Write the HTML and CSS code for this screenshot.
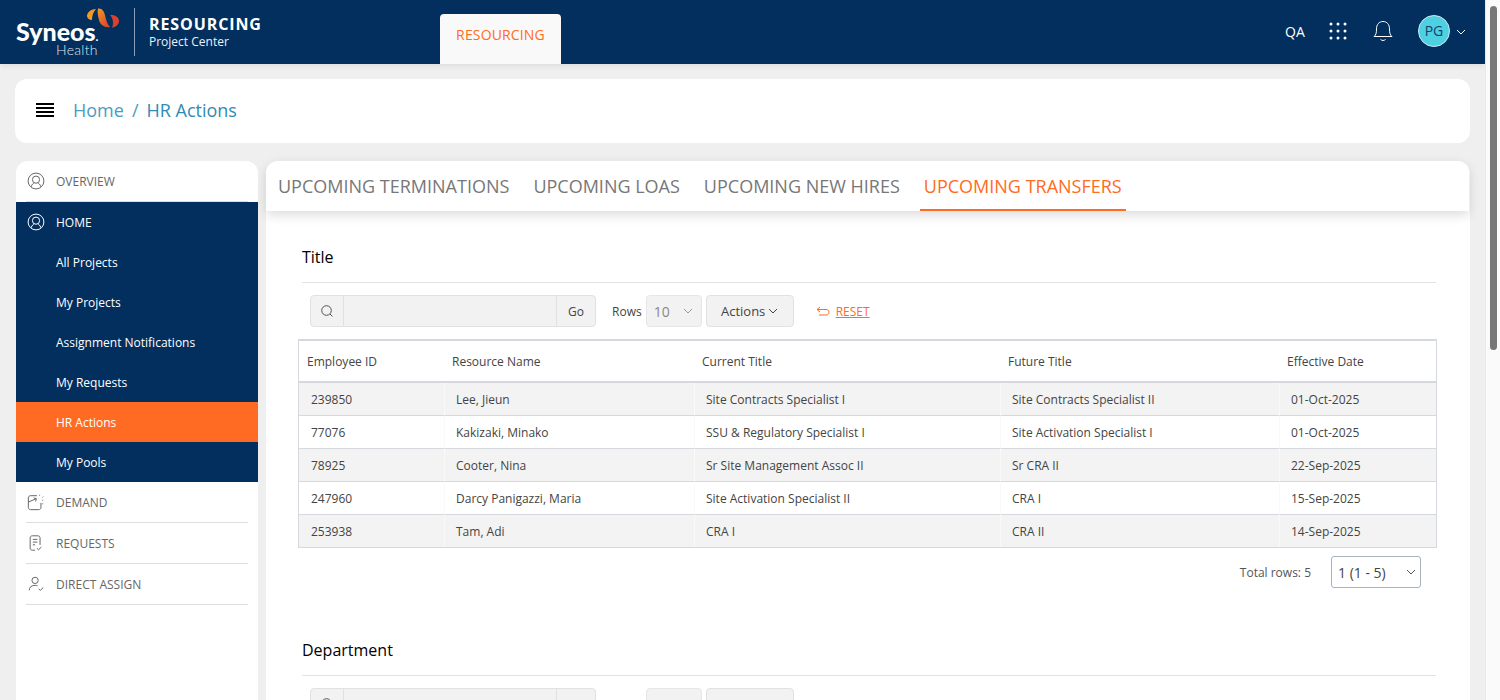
FILE: index.html
```html
<!DOCTYPE html>
<html lang="en">
<head>
  <meta charset="UTF-8" />
  <title>HR Actions</title>
  <link rel="stylesheet" href="styles.css">
</head>
<body>
  <div class="page">
    <header class="topbar">
      <div class="logo">
        <svg class="logo-mark" width="34" height="22" viewBox="0 0 34 22">
          <defs>
            <linearGradient id="swirl" x1="0" y1="0" x2="0.6" y2="1">
              <stop offset="0" stop-color="#f39a26"/>
              <stop offset="1" stop-color="#dc4a2b"/>
            </linearGradient>
          </defs>
          <path d="M10 1C4 1 1 5 1 8C1 10 3 12 6 12C6 8 7 4 10 1Z" fill="#f39a26"/>
          <path d="M12 0.500C16 0 18 3 19 7C20 12 21 16 24 19C19 20 14 17 13 12C12 8 11 4 12 0.500Z" fill="url(#swirl)"/>
          <path d="M24 7C29 6.500 33 9 33 13C33 17 29 19.500 26 19.500C28 16 27 10 24 7Z" fill="#d9412b"/>
        </svg>
        <span class="logo-name">Syneos<small>.</small></span>
        <span class="logo-sub">Health</span>
      </div>
      <div class="app-name">
        <strong>RESOURCING</strong>
        <span>Project Center</span>
      </div>
      <a class="app-tab">RESOURCING</a>
      <div class="top-right">
        <span class="env">QA</span>
        <svg class="grid-icon" width="18" height="18" viewBox="0 0 18 18" fill="#fff">
          <circle cx="2" cy="2" r="1.500"/><circle cx="9" cy="2" r="1.500"/><circle cx="16" cy="2" r="1.500"/>
          <circle cx="2" cy="9" r="1.500"/><circle cx="9" cy="9" r="1.500"/><circle cx="16" cy="9" r="1.500"/>
          <circle cx="2" cy="16" r="1.500"/><circle cx="9" cy="16" r="1.500"/><circle cx="16" cy="16" r="1.500"/>
        </svg>
        <svg class="bell-icon" width="20" height="22" viewBox="0 0 20 22" fill="none" stroke="#fff" stroke-width="1">
          <path d="M1 16.500C3 15 3.500 13 3.500 9C3.500 4.500 6 1.500 10 1.500C14 1.500 16.500 4.500 16.500 9C16.500 13 17 15 19 16.500Z"/>
          <path d="M7.500 19.500C9 20.800 11 20.800 12.500 19.500"/>
        </svg>
        <span class="avatar">PG</span>
        <svg class="avatar-caret" width="10" height="6" viewBox="0 0 10 6" fill="none" stroke="#fff" stroke-width="1"><path d="M1 1L5 5L9 1"/></svg>
      </div>
    </header>

    <div class="crumbs">
      <div class="burger"><i></i><i></i><i></i><i></i></div>
      <a class="crumb">Home</a>
      <span class="crumb-sep">/</span>
      <a class="crumb current">HR Actions</a>
    </div>

    <div class="body-row">
      <nav class="sidebar">
        <a class="nav-item overview">
          <svg width="18" height="18" viewBox="0 0 20 20" fill="none" stroke="currentColor" stroke-width="1.100"><circle cx="10" cy="10" r="8.800"/><circle cx="10" cy="8.500" r="4"/><path d="M4.500 16.500C5.500 13.500 7 12.500 8 12.300M15.500 16.500C14.500 13.500 13 12.500 12 12.300"/></svg>
          OVERVIEW
        </a>
        <div class="home-group">
          <a class="nav-item">
            <svg width="18" height="18" viewBox="0 0 20 20" fill="none" stroke="currentColor" stroke-width="1.100"><circle cx="10" cy="10" r="8.800"/><circle cx="10" cy="8.500" r="4"/><path d="M4.500 16.500C5.500 13.500 7 12.500 8 12.300M15.500 16.500C14.500 13.500 13 12.500 12 12.300"/></svg>
            HOME
          </a>
          <a class="sub-item">All Projects</a>
          <a class="sub-item">My Projects</a>
          <a class="sub-item">Assignment Notifications</a>
          <a class="sub-item">My Requests</a>
          <a class="sub-item active">HR Actions</a>
          <a class="sub-item">My Pools</a>
        </div>
        <a class="nav-item lined">
          <svg width="18" height="18" viewBox="0 0 20 20" fill="none" stroke="currentColor" stroke-width="1.100"><path d="M11 3H4C2.500 3 1.500 4 1.500 5.500V16C1.500 17.500 2.500 18.500 4 18.500H13C14.500 18.500 15.500 17.500 15.500 16V11"/><path d="M1.500 10L10 6.500M7.500 5.500L10.500 6.300L9.500 9.500"/><path d="M14 2V3M18 4L17 5M18 8H17M18 12H17"/></svg>
          DEMAND
        </a>
        <a class="nav-item lined">
          <svg width="18" height="18" viewBox="0 0 20 20" fill="none" stroke="currentColor" stroke-width="1.100"><path d="M9 18H6C4.500 18 3.500 17 3.500 15.500V4.500C3.500 3 4.500 2 6 2H12C13.500 2 14.500 3 14.500 4.500V12"/><path d="M6.500 6H11.500M6.500 9H11.500M6.500 12H9"/><path d="M11 16L12.800 17.500L16 14.500"/></svg>
          REQUESTS
        </a>
        <a class="nav-item lined">
          <svg width="18" height="18" viewBox="0 0 20 20" fill="none" stroke="currentColor" stroke-width="1.100"><circle cx="9" cy="6" r="3.500"/><path d="M2.500 17C2.500 13.500 5 11.500 9 11.500C10 11.500 11 11.600 11.800 12"/><path d="M13 15.500L14.800 17L18 14"/></svg>
          DIRECT ASSIGN
        </a>
      </nav>

      <main class="content">
        <div class="tabs">
          <a class="tab">UPCOMING TERMINATIONS</a>
          <a class="tab">UPCOMING LOAS</a>
          <a class="tab">UPCOMING NEW HIRES</a>
          <a class="tab active">UPCOMING TRANSFERS</a>
        </div>

        <section class="report">
          <h2 class="report-title">Title</h2>
          <div class="toolbar">
            <div class="search">
              <span class="search-icon">
                <svg width="14" height="14" viewBox="0 0 14 14" fill="none" stroke="#555" stroke-width="1"><circle cx="6.500" cy="6.500" r="4.800"/><path d="M10 10L12.500 12.500"/></svg>
              </span>
              <span class="search-input"></span>
              <span class="search-go">Go</span>
            </div>
            <span class="rows-label">Rows</span>
            <div class="rows-select">10
              <svg width="10" height="6" viewBox="0 0 10 6" fill="none" stroke="#999" stroke-width="1"><path d="M1 1L5 5L9 1"/></svg>
            </div>
            <div class="actions">Actions
              <svg width="10" height="6" viewBox="0 0 10 6" fill="none" stroke="#444" stroke-width="1"><path d="M1 1L5 5L9 1"/></svg>
            </div>
            <a class="reset">
              <svg width="14" height="10" viewBox="0 0 14 10" fill="none" stroke="#ff6b22" stroke-width="1"><path d="M4 1L1 3.500L4 6M1 3.500H10C12 3.500 13 4.800 13 6.200C13 7.700 12 9 10 9H3"/></svg>
              <span>RESET</span>
            </a>
          </div>

          <table class="grid">
            <colgroup>
              <col class="col-id"><col class="col-name"><col class="col-current"><col class="col-future"><col class="col-date">
            </colgroup>
            <thead>
              <tr><th>Employee ID</th><th>Resource Name</th><th>Current Title</th><th>Future Title</th><th>Effective Date</th></tr>
            </thead>
            <tbody>
              <tr><td>239850</td><td>Lee, Jieun</td><td>Site Contracts Specialist I</td><td>Site Contracts Specialist II</td><td>01-Oct-2025</td></tr>
              <tr><td>77076</td><td>Kakizaki, Minako</td><td>SSU &amp; Regulatory Specialist I</td><td>Site Activation Specialist I</td><td>01-Oct-2025</td></tr>
              <tr><td>78925</td><td>Cooter, Nina</td><td>Sr Site Management Assoc II</td><td>Sr CRA II</td><td>22-Sep-2025</td></tr>
              <tr><td>247960</td><td>Darcy Panigazzi, Maria</td><td>Site Activation Specialist II</td><td>CRA I</td><td>15-Sep-2025</td></tr>
              <tr><td>253938</td><td>Tam, Adi</td><td>CRA I</td><td>CRA II</td><td>14-Sep-2025</td></tr>
            </tbody>
          </table>

          <div class="pager">
            <span>Total rows: 5</span>
            <div class="page-select">1 (1 - 5)
              <svg width="10" height="6" viewBox="0 0 10 6" fill="none" stroke="#555" stroke-width="1"><path d="M1 1L5 5L9 1"/></svg>
            </div>
          </div>
        </section>

        <section class="report next">
          <h2 class="report-title">Department</h2>
          <div class="toolbar">
            <div class="search">
              <span class="search-icon">
                <svg width="14" height="14" viewBox="0 0 14 14" fill="none" stroke="#555" stroke-width="1"><circle cx="6.500" cy="6.500" r="4.800"/><path d="M10 10L12.500 12.500"/></svg>
              </span>
              <span class="search-input"></span>
              <span class="search-go">Go</span>
            </div>
            <span class="rows-label">Rows</span>
            <div class="rows-select">10
              <svg width="10" height="6" viewBox="0 0 10 6" fill="none" stroke="#999" stroke-width="1"><path d="M1 1L5 5L9 1"/></svg>
            </div>
            <div class="actions">Actions
              <svg width="10" height="6" viewBox="0 0 10 6" fill="none" stroke="#444" stroke-width="1"><path d="M1 1L5 5L9 1"/></svg>
            </div>
          </div>
        </section>
      </main>
    </div>
  </div>

  <div class="scrollbar"><div class="scroll-thumb"></div></div>
</body>
</html>
```

FILE: styles.css
```css
* {
  box-sizing: border-box;
}

html, body {
  height: 700px;
  overflow: hidden;
}

body {
  margin: 0;
  display: flex;
  background: #efefef;
  font-family: "Open Sans", sans-serif;
  font-size: 12px;
  color: #444;
}

a {
  color: inherit;
  text-decoration: none;
}

.page {
  flex: 1;
  min-width: 0;
  display: flex;
  flex-direction: column;
}

/* top bar */
.topbar {
  height: 64px;
  flex: none;
  display: flex;
  background: #022f5e;
  color: #fff;
  box-shadow: 0 2px 6px rgba(0, 0, 0, 0.08);
}

.logo {
  position: relative;
  width: 135px;
  height: 48px;
  margin-top: 8px;
  border-right: 1px solid #8ba0b8;
}

.logo-mark {
  position: absolute;
  left: 86px;
  top: 0;
}

.logo-name {
  position: absolute;
  left: 16px;
  top: 13px;
  font-family: "Lato", sans-serif;
  font-weight: 900;
  font-size: 25px;
  line-height: 20px;
}

.logo-name small {
  font-size: 12px;
}

.logo-sub {
  position: absolute;
  left: 56px;
  top: 35px;
  font-family: "Lato", sans-serif;
  font-weight: 300;
  font-size: 14px;
  line-height: 14px;
  letter-spacing: 0.3px;
  color: #dfe5ec;
}

.app-name {
  width: 305px;
  padding: 14px 0 0 14px;
  display: flex;
  flex-direction: column;
}

.app-name strong {
  font-size: 16px;
  line-height: 20px;
  letter-spacing: 0.9px;
  font-weight: 700;
}

.app-name span {
  font-size: 12px;
  line-height: 16px;
  font-weight: 500;
  color: #eef1f5;
}

.app-tab {
  align-self: flex-end;
  width: 121px;
  height: 50px;
  padding-top: 11px;
  background: #f9f9f9;
  border-radius: 4px 4px 0 0;
  color: #ff6b22;
  font-size: 14px;
  line-height: 20px;
  letter-spacing: 0.15px;
  text-align: center;
}

.top-right {
  margin-left: auto;
  width: 200px;
  position: relative;
}

.env {
  position: absolute;
  left: 0;
  top: 22px;
  font-size: 14px;
  line-height: 20px;
}

.grid-icon {
  position: absolute;
  left: 44px;
  top: 22px;
}

.bell-icon {
  position: absolute;
  left: 88px;
  top: 20px;
}

.avatar {
  position: absolute;
  left: 133px;
  top: 15px;
  width: 32px;
  height: 32px;
  border-radius: 50%;
  border: 1px solid #cfe8ee;
  background: #4dd0e1;
  color: #14406b;
  font-size: 14px;
  line-height: 30px;
  text-align: center;
}

.avatar-caret {
  position: absolute;
  left: 171px;
  top: 29px;
}

/* breadcrumb */
.crumbs {
  height: 64px;
  flex: none;
  margin: 15px 15px 18px;
  padding: 0 0 2px 21px;
  display: flex;
  align-items: center;
  background: #fff;
  border-radius: 12px;
  font-size: 18px;
  color: #4a9dc0;
}

.burger {
  width: 18px;
  margin-right: 19px;
  display: flex;
  flex-direction: column;
  gap: 2px;
}

.burger i {
  display: block;
  height: 2px;
  background: #000;
}

.crumb.current {
  font-weight: 500;
  color: #2f8bb3;
}

.crumb-sep {
  margin: 0 8px;
}

/* sidebar + content */
.body-row {
  flex: 1;
  min-height: 0;
  display: flex;
  gap: 8px;
  padding: 0 15px 0 16px;
}

.sidebar {
  width: 242px;
  flex: none;
  background: #fff;
  border-radius: 12px 12px 0 0;
  overflow: hidden;
}

.nav-item {
  height: 41px;
  margin: 0 10px;
  padding-left: 1px;
  display: flex;
  align-items: center;
  gap: 11px;
  color: #666;
}

.nav-item svg {
  flex: none;
}

.overview {
  height: 41px;
  color: #666;
  border-bottom: 1px solid #ddd;
}

.lined {
  border-bottom: 1px solid #ddd;
}

.home-group {
  height: 280px;
  background: #022f5e;
  color: #fff;
}

.home-group .nav-item {
  height: 40px;
  color: #fff;
}

.sub-item {
  display: block;
  height: 40px;
  padding-left: 40px;
  line-height: 42px;
  color: #fff;
}

.sub-item.active {
  background: #ff6b22;
}

.content {
  flex: 1;
  min-width: 0;
  background: #fff;
  border-radius: 12px 12px 0 0;
}

.tabs {
  height: 50px;
  margin-right: 1px;
  padding-left: 8px;
  display: flex;
  gap: 16px;
  background: #fff;
  box-shadow: 0 4px 12px rgba(0, 0, 0, 0.14);
  position: relative;
  border-radius: 12px 12px 0 0;
}

.tab {
  height: 50px;
  padding: 0 4px;
  font-size: 18px;
  line-height: 50px;
  color: #777;
}

.tab.active {
  color: #ff6b22;
  border-bottom: 2px solid #ff6b22;
}

.report {
  padding: 0 34px 0 32px;
}

.report-title {
  margin: 0 0 0 4px;
  height: 72px;
  padding-top: 34px;
  font-size: 16px;
  line-height: 24px;
  font-weight: 500;
  color: #000;
  border-bottom: 1px solid #e2e2e2;
}

.toolbar {
  height: 32px;
  margin: 12px 0 12px 12px;
  display: flex;
  align-items: center;
}

.search {
  width: 286px;
  height: 32px;
  display: flex;
  background: #f2f2f2;
  border: 1px solid #e1e1e1;
  border-radius: 4px;
}

.search-icon {
  width: 33px;
  flex: none;
  display: flex;
  align-items: center;
  justify-content: center;
  border-right: 1px solid #e1e1e1;
}

.search-input {
  flex: 1;
}

.search-go {
  width: 39px;
  flex: none;
  border-left: 1px solid #e1e1e1;
  text-align: center;
  line-height: 31px;
}

.rows-label {
  margin: 0 4px 0 16px;
}

.rows-select {
  width: 56px;
  height: 32px;
  padding: 0 8px 0 7px;
  display: flex;
  align-items: center;
  justify-content: space-between;
  background: #f2f2f2;
  border: 1px solid #e6e6e6;
  border-radius: 4px;
  color: #888;
  font-size: 14px;
}

.actions {
  width: 88px;
  height: 32px;
  margin-left: 4px;
  display: flex;
  align-items: center;
  justify-content: center;
  gap: 3px;
  background: #f2f2f2;
  border: 1px solid #e1e1e1;
  border-radius: 4px;
  font-size: 13px;
}

.reset {
  margin-left: 22px;
  display: flex;
  align-items: center;
  gap: 6px;
  color: #ff6b22;
}

.reset span {
  text-decoration: underline;
}

.grid {
  width: 1139px;
  border-collapse: separate;
  border-spacing: 0;
  table-layout: fixed;
  border: 1px solid #d5d8dc;
  border-top-width: 2px;
}

.col-id { width: 145px; }
.col-name { width: 250px; }
.col-current { width: 306px; }
.col-future { width: 279px; }

.grid th {
  height: 42px;
  padding: 0 0 0 8px;
  text-align: left;
  font-weight: 400;
  color: #444;
  border-bottom: 2px solid #d5d8dc;
}

.grid td {
  height: 33px;
  padding: 0 0 0 11px;
  border-bottom: 1px solid #d5d8dc;
  border-left: 1px solid #f9f9f9;
}

.grid td:first-child {
  padding-left: 12px;
  border-left: none;
}

.grid tbody tr:nth-child(odd) {
  background: #f3f3f3;
}

.grid tbody tr:last-child td {
  height: 32px;
  border-bottom: none;
}

.pager {
  height: 32px;
  margin-top: 8px;
  padding-right: 15px;
  display: flex;
  justify-content: flex-end;
  align-items: center;
  gap: 20px;
  color: #555;
}

.page-select {
  width: 90px;
  height: 32px;
  padding: 0 4px 0 6px;
  display: flex;
  align-items: center;
  justify-content: space-between;
  border: 1px solid #a9b3c0;
  border-radius: 3px;
  color: #444;
  font-size: 14px;
}

.report.next {
  padding-top: 16px;
}

/* page scrollbar */
.scrollbar {
  width: 15px;
  flex: none;
  padding: 6px 3px 0 4px;
  background: #fafafa;
  border-left: 1px solid #e8e8e8;
}

.scroll-thumb {
  height: 344px;
  background: #777;
  border-radius: 4px;
}
```
